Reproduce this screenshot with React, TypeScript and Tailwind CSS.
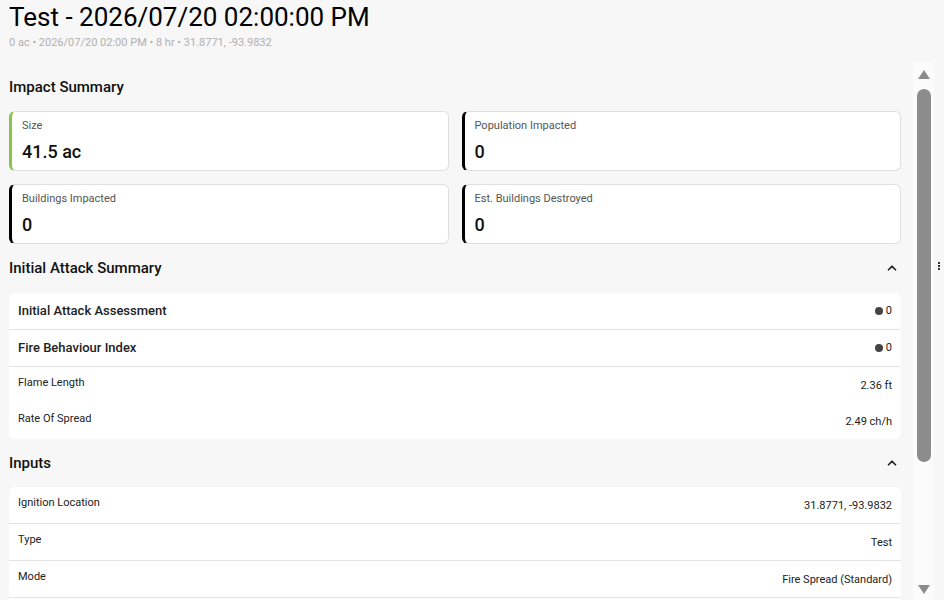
import { ChevronUp } from "lucide-react";

type Stat = { label: string; value: string; accent: string };

const stats: Stat[] = [
  { label: "Size", value: "41.5 ac", accent: "border-l-[#8bc34a]" },
  { label: "Population Impacted", value: "0", accent: "border-l-black" },
  { label: "Buildings Impacted", value: "0", accent: "border-l-black" },
  { label: "Est. Buildings Destroyed", value: "0", accent: "border-l-black" },
];

function SectionHeader({ title, collapsible }: { title: string; collapsible?: boolean }) {
  return (
    <div className="flex h-[30px] items-center justify-between pr-[2px]">
      <h2 className="text-[15px] font-medium text-[#111]">{title}</h2>
      {collapsible && <ChevronUp size={14} strokeWidth={3} className="text-[#222]" />}
    </div>
  );
}

function StatCard({ stat }: { stat: Stat }) {
  return (
    <div className={`h-[60px] rounded-[6px] border border-[#dedede] border-l-[3px] bg-white pl-[10px] pt-[7px] ${stat.accent}`}>
      <p className="text-[11px] leading-[13px] text-[#555]">{stat.label}</p>
      <p className="mt-[9px] text-[18px] font-medium leading-[22px] text-[#111]">{stat.value}</p>
    </div>
  );
}

function IndexRow({ label, value }: { label: string; value: string }) {
  return (
    <div className="flex h-[37px] items-center justify-between border-b border-[#e2e2e2] px-[9px]">
      <span className="text-[13px] font-medium text-[#222]">{label}</span>
      <span className="flex items-center gap-[3px] text-[11px] text-[#222]">
        <span className="h-[8px] w-[8px] rounded-full bg-[#444]" />
        {value}
      </span>
    </div>
  );
}

function ValueRow({ label, value, divider }: { label: string; value: string; divider?: boolean }) {
  return (
    <div className={`flex justify-between px-[9px] ${divider ? "h-[37px] border-b border-[#e2e2e2]" : "h-[36px]"}`}>
      <span className="pt-[9px] text-[11px] leading-[13px] text-[#222]">{label}</span>
      <span className="self-center pt-[3px] text-[11px] text-[#222]">{value}</span>
    </div>
  );
}

function Scrollbar() {
  return (
    <div className="flex w-[21px] flex-col items-center bg-[#fbfbfb]">
      <div className="mt-[8px] h-0 w-0 border-x-[6px] border-b-[9px] border-x-transparent border-b-[#8c8c8c]" />
      <div className="mt-[10px] h-[373px] w-[14px] rounded-full bg-[#8c8c8c]" />
      <div className="mt-auto mb-[6px] h-0 w-0 border-x-[6px] border-t-[9px] border-x-transparent border-t-[#8c8c8c]" />
    </div>
  );
}

export default function App() {
  return (
    <div className="flex h-[600px] w-[944px] flex-col overflow-hidden bg-[#f7f7f7] font-['Roboto',sans-serif]">
      <header className="h-[62px] px-[9px] pt-[2px]">
        <h1 className="text-[26px] leading-[30px] text-black">Test - 2026/07/20 02:00:00 PM</h1>
        <p className="mt-[3px] text-[11px] text-[#b0b0b0]">0 ac • 2026/07/20 02:00 PM • 8 hr • 31.8771, -93.9832</p>
      </header>

      <div className="flex min-h-0 flex-1">
        <main className="flex-1 overflow-hidden pl-[9px] pr-[12px] pt-[10px]">
          <SectionHeader title="Impact Summary" />
          <div className="mt-[9px] grid grid-cols-2 gap-[13px]">
            {stats.map((s) => (
              <StatCard key={s.label} stat={s} />
            ))}
          </div>

          <div className="mt-[9px]">
            <SectionHeader title="Initial Attack Summary" collapsible />
          </div>
          <div className="mt-[10px] overflow-hidden rounded-[6px] bg-white">
            <IndexRow label="Initial Attack Assessment" value="0" />
            <IndexRow label="Fire Behaviour Index" value="0" />
            <ValueRow label="Flame Length" value="2.36 ft" />
            <ValueRow label="Rate Of Spread" value="2.49 ch/h" />
          </div>

          <div className="mt-[9px]">
            <SectionHeader title="Inputs" collapsible />
          </div>
          <div className="mt-[9px] rounded-[6px] bg-white pb-[24px]">
            <ValueRow label="Ignition Location" value="31.8771, -93.9832" divider />
            <ValueRow label="Type" value="Test" divider />
            <ValueRow label="Mode" value="Fire Spread (Standard)" divider />
          </div>
        </main>

        <Scrollbar />

        <div className="flex w-[10px] items-start justify-center pt-[200px]">
          <div className="flex flex-col gap-[1px]">
            <span className="h-[2px] w-[2px] bg-[#333]" />
            <span className="h-[2px] w-[2px] bg-[#333]" />
            <span className="h-[2px] w-[2px] bg-[#333]" />
          </div>
        </div>
      </div>
    </div>
  );
}
